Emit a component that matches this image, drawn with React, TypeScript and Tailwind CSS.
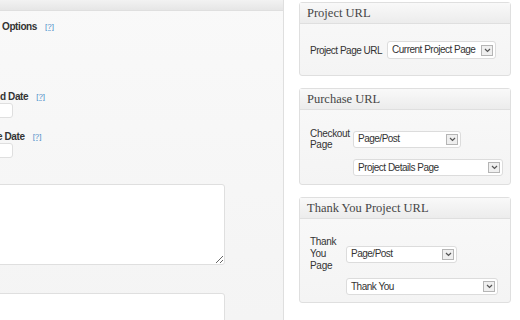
import React from 'react';

function Chevron() {
    return (
        <span className="flex h-[11px] w-[12px] shrink-0 items-center justify-center border border-[#b5b5b5] bg-[#efefef]">
            <svg width="7" height="5" viewBox="0 0 7 5">
                <path d="M1 1 L3.5 3.5 L6 1" fill="none" stroke="#555" strokeWidth="1.2" />
            </svg>
        </span>
    );
}

function FakeSelect({ value, width, height = 'h-[17px]' }: { value: string; width: string; height?: string }) {
    return (
        <div className={`${width} ${height} flex items-center justify-between rounded-[3px] border border-[#dcdcdc] bg-white pl-[4px] pr-[2px]`}>
            <span className="whitespace-nowrap text-[10px] leading-none tracking-[-0.05em] text-[#333]">{value}</span>
            <Chevron />
        </div>
    );
}

function Box({ title, children, body }: { title: string; children: React.ReactNode; body: string }) {
    return (
        <div className="w-[212px] rounded-[3px] border border-[#dfdfdf] bg-gradient-to-b from-[#f9f9f9] to-[#f4f4f4]">
            <div className="flex h-[21px] items-center border-b border-[#dfdfdf] bg-gradient-to-b from-[#f9f9f9] to-[#ececec] px-[7px]">
                <span className="text-[12.5px] leading-none text-[#464646] [font-family:'Liberation_Serif',serif]">{title}</span>
            </div>
            <div className={body}>{children}</div>
        </div>
    );
}

function Help() {
    return <a className="ml-[8px] text-[8px] font-normal tracking-normal text-[#4a8cc7] underline decoration-[#9cc0e0]">[?]</a>;
}

export default function App() {
    return (
        <div className="flex h-[320px] w-[520px] overflow-hidden bg-white [font-family:'Liberation_Sans',Arial,sans-serif]">
            <div className="flex h-full w-[284px] shrink-0 flex-col overflow-hidden border-r border-[#dfdfdf] bg-gradient-to-b from-[#f9f9f9] to-[#f4f4f4]">
                <div className="h-[11px] shrink-0 border-b border-[#dfdfdf] bg-gradient-to-b from-[#f2f2f2] to-[#e6e6e6]" />
                <div className="mt-[10px] flex h-[12px] items-center pl-[2px] text-[10px] font-bold leading-[12px] tracking-[-0.04em] text-[#333]">
                    Options <Help />
                </div>
                <div className="mt-[58px] flex h-[12px] items-center text-[10px] font-bold leading-[12px] tracking-[-0.04em] text-[#333]">
                    d Date <Help />
                </div>
                <div className="-ml-[27px] h-[15px] w-[40px] shrink-0 rounded-[3px] border border-[#dfdfdf] bg-white" />
                <div className="mt-[13px] flex h-[12px] items-center text-[10px] font-bold leading-[12px] tracking-[-0.04em] text-[#333]">
                    <span className="-ml-[3px]">e Date</span> <Help />
                </div>
                <div className="-ml-[27px] h-[15px] w-[40px] shrink-0 rounded-[3px] border border-[#dfdfdf] bg-white" />
                <textarea readOnly className="-ml-[20px] mt-[26px] h-[81px] w-[245px] shrink-0 rounded-[3px] border border-[#dfdfdf] bg-white outline-none" />
                <textarea readOnly className="-ml-[20px] mt-[28px] h-[60px] w-[245px] shrink-0 rounded-[3px] border border-[#dfdfdf] bg-white outline-none" />
            </div>

            <div className="flex flex-col gap-[12px] pl-[15px] pt-[2px]">
                <Box title="Project URL" body="flex items-center pl-[10px] pt-[17px] pb-[16px]">
                    <span className="mr-[5px] whitespace-nowrap text-[10px] tracking-[-0.05em] text-[#333]">Project Page URL</span>
                    <FakeSelect value="Current Project Page" width="w-[109px]" height="h-[18px]" />
                </Box>

                <Box title="Purchase URL" body="pl-[10px] pt-[18px] pb-[8px]">
                    <div className="flex items-center">
                        <span className="w-[43px] text-[10px] leading-[11px] tracking-[-0.03em] text-[#333]">Checkout Page</span>
                        <FakeSelect value="Page/Post" width="w-[108px]" />
                    </div>
                    <div className="mt-[9px] pl-[43px]">
                        <FakeSelect value="Project Details Page" width="w-[150px]" />
                    </div>
                </Box>

                <Box title="Thank You Project URL" body="pl-[10px] pt-[17px] pb-[7px]">
                    <div className="flex items-center">
                        <span className="w-[36px] text-[10px] leading-[12px] tracking-[-0.03em] text-[#333]">Thank You Page</span>
                        <FakeSelect value="Page/Post" width="w-[111px]" />
                    </div>
                    <div className="mt-[6px] pl-[36px]">
                        <FakeSelect value="Thank You" width="w-[152px]" />
                    </div>
                </Box>
            </div>
        </div>
    );
}
